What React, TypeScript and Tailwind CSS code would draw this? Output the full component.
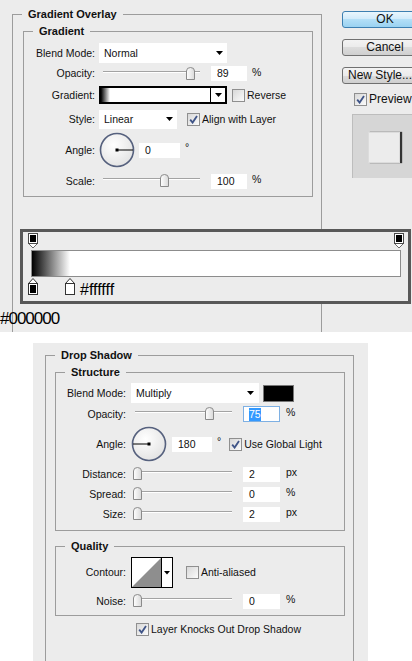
import React from 'react';

type RowProps = {
  label: string;
  h: string;
  lc: string;
  children?: React.ReactNode;
  className?: string;
};

function Row({ label, h, lc, children, className = '' }: RowProps) {
  return (
    <div className={`flex items-center ${h} ${className}`}>
      <span className={`w-[75px] shrink-0 text-right ${lc}`}>{label}</span>
      {children}
    </div>
  );
}

function Arrow() {
  return (
    <svg width="7" height="4" viewBox="0 0 7 4" className="shrink-0">
      <path d="M0 0H7L3.5 4Z" fill="#000" />
    </svg>
  );
}

function Check({ on }: { on?: boolean }) {
  return (
    <span className="flex h-[13px] w-[13px] shrink-0 items-center justify-center border border-[#8f8f8f] bg-linear-to-br from-[#d8d8d8] to-[#fbfbfb]">
      {on && (
        <svg width="9" height="9" viewBox="0 0 9 9">
          <path d="M1.2 4.6L3.6 7.6L8 1" fill="none" stroke="#3f5487" strokeWidth="1.8" />
        </svg>
      )}
    </span>
  );
}

function Select({ value, className }: { value: string; className: string }) {
  return (
    <div className={`flex shrink-0 items-center justify-between bg-white pl-[5px] ${className}`}>
      <span>{value}</span>
      <Arrow />
    </div>
  );
}

function Thumb() {
  return (
    <svg width="9" height="13" viewBox="0 0 9 13">
      <defs>
        <linearGradient id="th" x1="0" y1="0" x2="1" y2="0">
          <stop offset="0" stopColor="#ffffff" />
          <stop offset="1" stopColor="#d9d9d9" />
        </linearGradient>
      </defs>
      <path d="M0.5 12.5V4Q0.5 0.5 4.5 0.5Q8.5 0.5 8.5 4V12.5Z" fill="url(#th)" stroke="#8a8a8a" />
    </svg>
  );
}

// pos = thumb centre measured from the start of the track
function Slider({ pos }: { pos: number }) {
  return (
    <div className="relative h-[14px] w-[112px] shrink-0">
      <div className="absolute left-[4px] right-[11px] top-[4px] h-[2px] border-t border-b border-t-[#a3a3a3] border-b-white" />
      <div className="absolute top-0" style={{ left: pos }}>
        <Thumb />
      </div>
    </div>
  );
}

function Field({ value, className }: { value: string; className: string }) {
  return (
    <span className={`flex h-[15px] shrink-0 items-center bg-white pl-[6px] ${className}`}>{value}</span>
  );
}

function Dial({ left }: { left?: boolean }) {
  return (
    <svg width="36" height="36" viewBox="0 0 36 36" className="shrink-0">
      <defs>
        <radialGradient id={left ? 'd2' : 'd1'} cx="0.4" cy="0.35" r="0.7">
          <stop offset="0" stopColor="#ffffff" />
          <stop offset="1" stopColor="#e2e2e2" />
        </radialGradient>
      </defs>
      <circle cx="18" cy="18" r="16.5" fill={`url(#${left ? 'd2' : 'd1'})`} stroke="#56617e" strokeWidth="1.6" />
      <line x1="18" y1="18" x2={left ? 2 : 34} y2="18" stroke="#000" strokeWidth="1" />
      <rect x="16.5" y="16.5" width="3" height="3" fill="#000" />
    </svg>
  );
}

function StopDown() {
  return (
    <svg width="10" height="16" viewBox="0 0 10 16">
      <path d="M0.5 10.5L5 15L9.5 10.5" fill="#fff" stroke="#6a6a6a" />
      <rect x="0.5" y="0.5" width="9" height="10" fill="#fff" stroke="#4a4a4a" />
      <rect x="2" y="2" width="6" height="7" fill="#000" />
    </svg>
  );
}

function StopUp({ black }: { black?: boolean }) {
  return (
    <svg width="10" height="17" viewBox="0 0 10 17">
      <path d="M0.5 5.5L5 0.5L9.5 5.5Z" fill="#fff" stroke="#333" />
      <rect x="0.5" y="5.5" width="9" height="11" fill="#fff" stroke="#333" />
      {black && <rect x="2" y="7" width="6" height="8" fill="#000" />}
    </svg>
  );
}

function Contour() {
  return (
    <svg width="42" height="31" viewBox="0 0 42 31" className="shrink-0">
      <rect x="0.5" y="0.5" width="41" height="30" fill="#fff" stroke="#000" />
      <path d="M1 30L30 1V30Z" fill="#8e8e8e" />
      <line x1="30.5" y1="0" x2="30.5" y2="31" stroke="#000" />
      <path d="M33 14H39L36 17.5Z" fill="#000" />
    </svg>
  );
}

function Legend({ children }: { children: React.ReactNode }) {
  return <legend className="ml-[9px] px-[6px] text-[11px] font-bold leading-[13px]">{children}</legend>;
}

export default function App() {
  return (
    <div className="h-[661px] w-[412px] overflow-hidden bg-white font-['Liberation_Sans',Arial,sans-serif] text-[10.5px] leading-[13px] text-[#111]">
      {/* Gradient Overlay dialog */}
      <div className="relative h-[332px] overflow-hidden bg-[#ececec]">
        <div className="flex h-full">
          <div className="w-[322px] shrink-0 pl-[12px] pt-[8px]">
            <fieldset className="h-[400px] w-[310px] border border-[#9c9c9c]">
              <Legend>Gradient Overlay</Legend>
              <fieldset className="mt-[4px] ml-[10px] mr-[8px] border border-[#9c9c9c] pt-[4px] pb-[3px]">
                <Legend>Gradient</Legend>
                <Row label="Blend Mode:" h="h-[22px]" lc="pr-[4px]">
                  <Select value="Normal" className="h-[20px] w-[128px] pr-[4px]" />
                </Row>
                <Row label="Opacity:" h="h-[19px]" lc="pr-[4px]">
                  <Slider pos={87} />
                  <Field value="89" className="w-[36px]" />
                  <span className="-mt-[3px] ml-[5px]">%</span>
                </Row>
                <Row label="Gradient:" h="h-[24px]" lc="pr-[4px]">
                  <div className="flex h-[18px] w-[128px] shrink-0 border-2 border-black bg-white">
                    <div className="flex-1 bg-[linear-gradient(to_right,#000,#fff_9px)]" />
                    <div className="flex w-[15px] items-center justify-center border-l border-black">
                      <Arrow />
                    </div>
                  </div>
                  <span className="ml-[5px]">
                    <Check />
                  </span>
                  <span className="ml-[2px]">Reverse</span>
                </Row>
                <Row label="Style:" h="h-[24px]" lc="pr-[4px]">
                  <Select value="Linear" className="h-[19px] w-[78px] pr-[4px]" />
                  <span className="ml-[10px]">
                    <Check on />
                  </span>
                  <span className="ml-[2px]">Align with Layer</span>
                </Row>
                <Row label="Angle:" h="h-[38px]" lc="pr-[4px]">
                  <Dial />
                  <Field value="0" className="ml-[4px] w-[41px]" />
                  <span className="-mt-[6px] ml-[5px]">°</span>
                </Row>
                <Row label="Scale:" h="h-[24px]" lc="pr-[4px]">
                  <Slider pos={61} />
                  <Field value="100" className="w-[36px]" />
                  <span className="-mt-[3px] ml-[5px]">%</span>
                </Row>
              </fieldset>
            </fieldset>
          </div>

          <div className="flex-1 overflow-hidden pl-[20px] pt-[11px] text-[12px]">
            <div className="flex h-[17px] w-[86px] items-center justify-center rounded-[3px] border border-[#3c7fb1] bg-[linear-gradient(#e9f6fd,#cfeafa_50%,#b3dff7_50%,#9ad2f1)]">
              OK
            </div>
            <div className="mt-[11px] flex h-[17px] w-[86px] items-center justify-center rounded-[3px] border border-[#707070] bg-[linear-gradient(#f3f3f3,#ebebeb_50%,#dcdcdc_50%,#cfcfcf)]">
              Cancel
            </div>
            <div className="mt-[11px] flex h-[17px] w-[86px] items-center whitespace-nowrap rounded-[3px] border border-[#707070] bg-[linear-gradient(#f3f3f3,#ebebeb_50%,#dcdcdc_50%,#cfcfcf)] pl-[5px]">
              New Style...
            </div>
            <div className="mt-[8px] flex h-[14px] items-center pl-[12px]">
              <Check on />
              <span className="ml-[2px]">Preview</span>
            </div>
            <div className="ml-[10px] mt-[8px] h-[64px] w-[70px] border-t border-l border-[#bdbdbd] bg-[#d6d6d6] pl-[15px] pt-[17px]">
              <div className="h-[31px] w-[32px] border border-[#dcdcdc] bg-[#ececec] shadow-[2px_0_1px_#333]" />
            </div>
          </div>
        </div>

        {/* gradient editor strip, pasted over the dialog */}
        <div className="absolute left-[20px] top-[229px] h-[75px] w-[391px] border-[3px] border-[#585858] bg-[#ececec]">
          <div className="mt-[1px] flex h-[16px] justify-between pl-[5px] pr-[4px]">
            <StopDown />
            <StopDown />
          </div>
          <div className="ml-[8px] mt-[1px] h-[27px] w-[370px] border border-[#8c8c8c] bg-[linear-gradient(to_right,#000_0px,#fff_38px)]" />
          <div className="mt-[1px] flex items-start pl-[5px]">
            <StopUp black />
            <span className="ml-[27px]">
              <StopUp />
            </span>
            <span className="ml-[5px] mt-[4px] text-[16px] leading-[16px] text-black">#ffffff</span>
          </div>
        </div>
        <span className="absolute left-0 top-[310px] text-[17px] leading-[17px] tracking-[-1px] text-black">#000000</span>
      </div>

      {/* Drop Shadow dialog */}
      <div className="h-[329px] pl-[33px] pt-[11px]">
        <div className="h-[318px] w-[335px] overflow-hidden bg-[#ececec] pl-[12px] pt-[6px]">
          <fieldset className="h-[400px] w-[309px] border border-[#9c9c9c]">
            <Legend>Drop Shadow</Legend>
            <fieldset className="mt-[4px] ml-[9px] mr-[8px] border border-[#9c9c9c] pt-[3px] pb-[6px]">
              <Legend>Structure</Legend>
              <Row label="Blend Mode:" h="h-[22px]" lc="pr-[5px]">
                <Select value="Multiply" className="h-[20px] w-[128px] pr-[5px]" />
                <span className="ml-[4px] h-[17px] w-[31px] border border-[#777] bg-black" />
              </Row>
              <Row label="Opacity:" h="h-[20px]" lc="pr-[5px]">
                <Slider pos={74} />
                <span className="flex h-[16px] w-[37px] shrink-0 items-center border border-[#7eb0e3] bg-white pl-[5px]">
                  <span className="bg-[#3399ff] text-white">75</span>
                </span>
                <span className="-mt-[3px] ml-[6px]">%</span>
              </Row>
              <Row label="Angle:" h="h-[40px]" lc="pr-[5px]">
                <Dial left />
                <Field value="180" className="ml-[5px] w-[40px]" />
                <span className="-mt-[6px] ml-[5px]">°</span>
                <span className="ml-[8px]">
                  <Check on />
                </span>
                <span className="ml-[2px]">Use Global Light</span>
              </Row>
              <Row label="Distance:" h="h-[20px]" lc="pr-[5px]">
                <Slider pos={2} />
                <Field value="2" className="w-[37px]" />
                <span className="-mt-[3px] ml-[6px]">px</span>
              </Row>
              <Row label="Spread:" h="h-[20px]" lc="pr-[5px]">
                <Slider pos={2} />
                <Field value="0" className="w-[37px]" />
                <span className="-mt-[3px] ml-[6px]">%</span>
              </Row>
              <Row label="Size:" h="h-[20px]" lc="pr-[5px]">
                <Slider pos={2} />
                <Field value="2" className="w-[37px]" />
                <span className="-mt-[3px] ml-[6px]">px</span>
              </Row>
            </fieldset>

            <fieldset className="mt-[9px] ml-[9px] mr-[8px] border border-[#9c9c9c] pt-[3px] pb-[4px]">
              <Legend>Quality</Legend>
              <Row label="Contour:" h="h-[33px]" lc="pr-[5px]">
                <Contour />
                <span className="ml-[13px]">
                  <Check />
                </span>
                <span className="ml-[2px]">Anti-aliased</span>
              </Row>
              <Row label="Noise:" h="h-[20px]" lc="pr-[5px]" className="mt-[2px]">
                <Slider pos={2} />
                <Field value="0" className="w-[37px]" />
                <span className="-mt-[3px] ml-[6px]">%</span>
              </Row>
            </fieldset>

            <div className="mt-[3px] flex h-[20px] items-center pl-[90px]">
              <Check on />
              <span className="ml-[2px]">Layer Knocks Out Drop Shadow</span>
            </div>
          </fieldset>
        </div>
      </div>
    </div>
  );
}
